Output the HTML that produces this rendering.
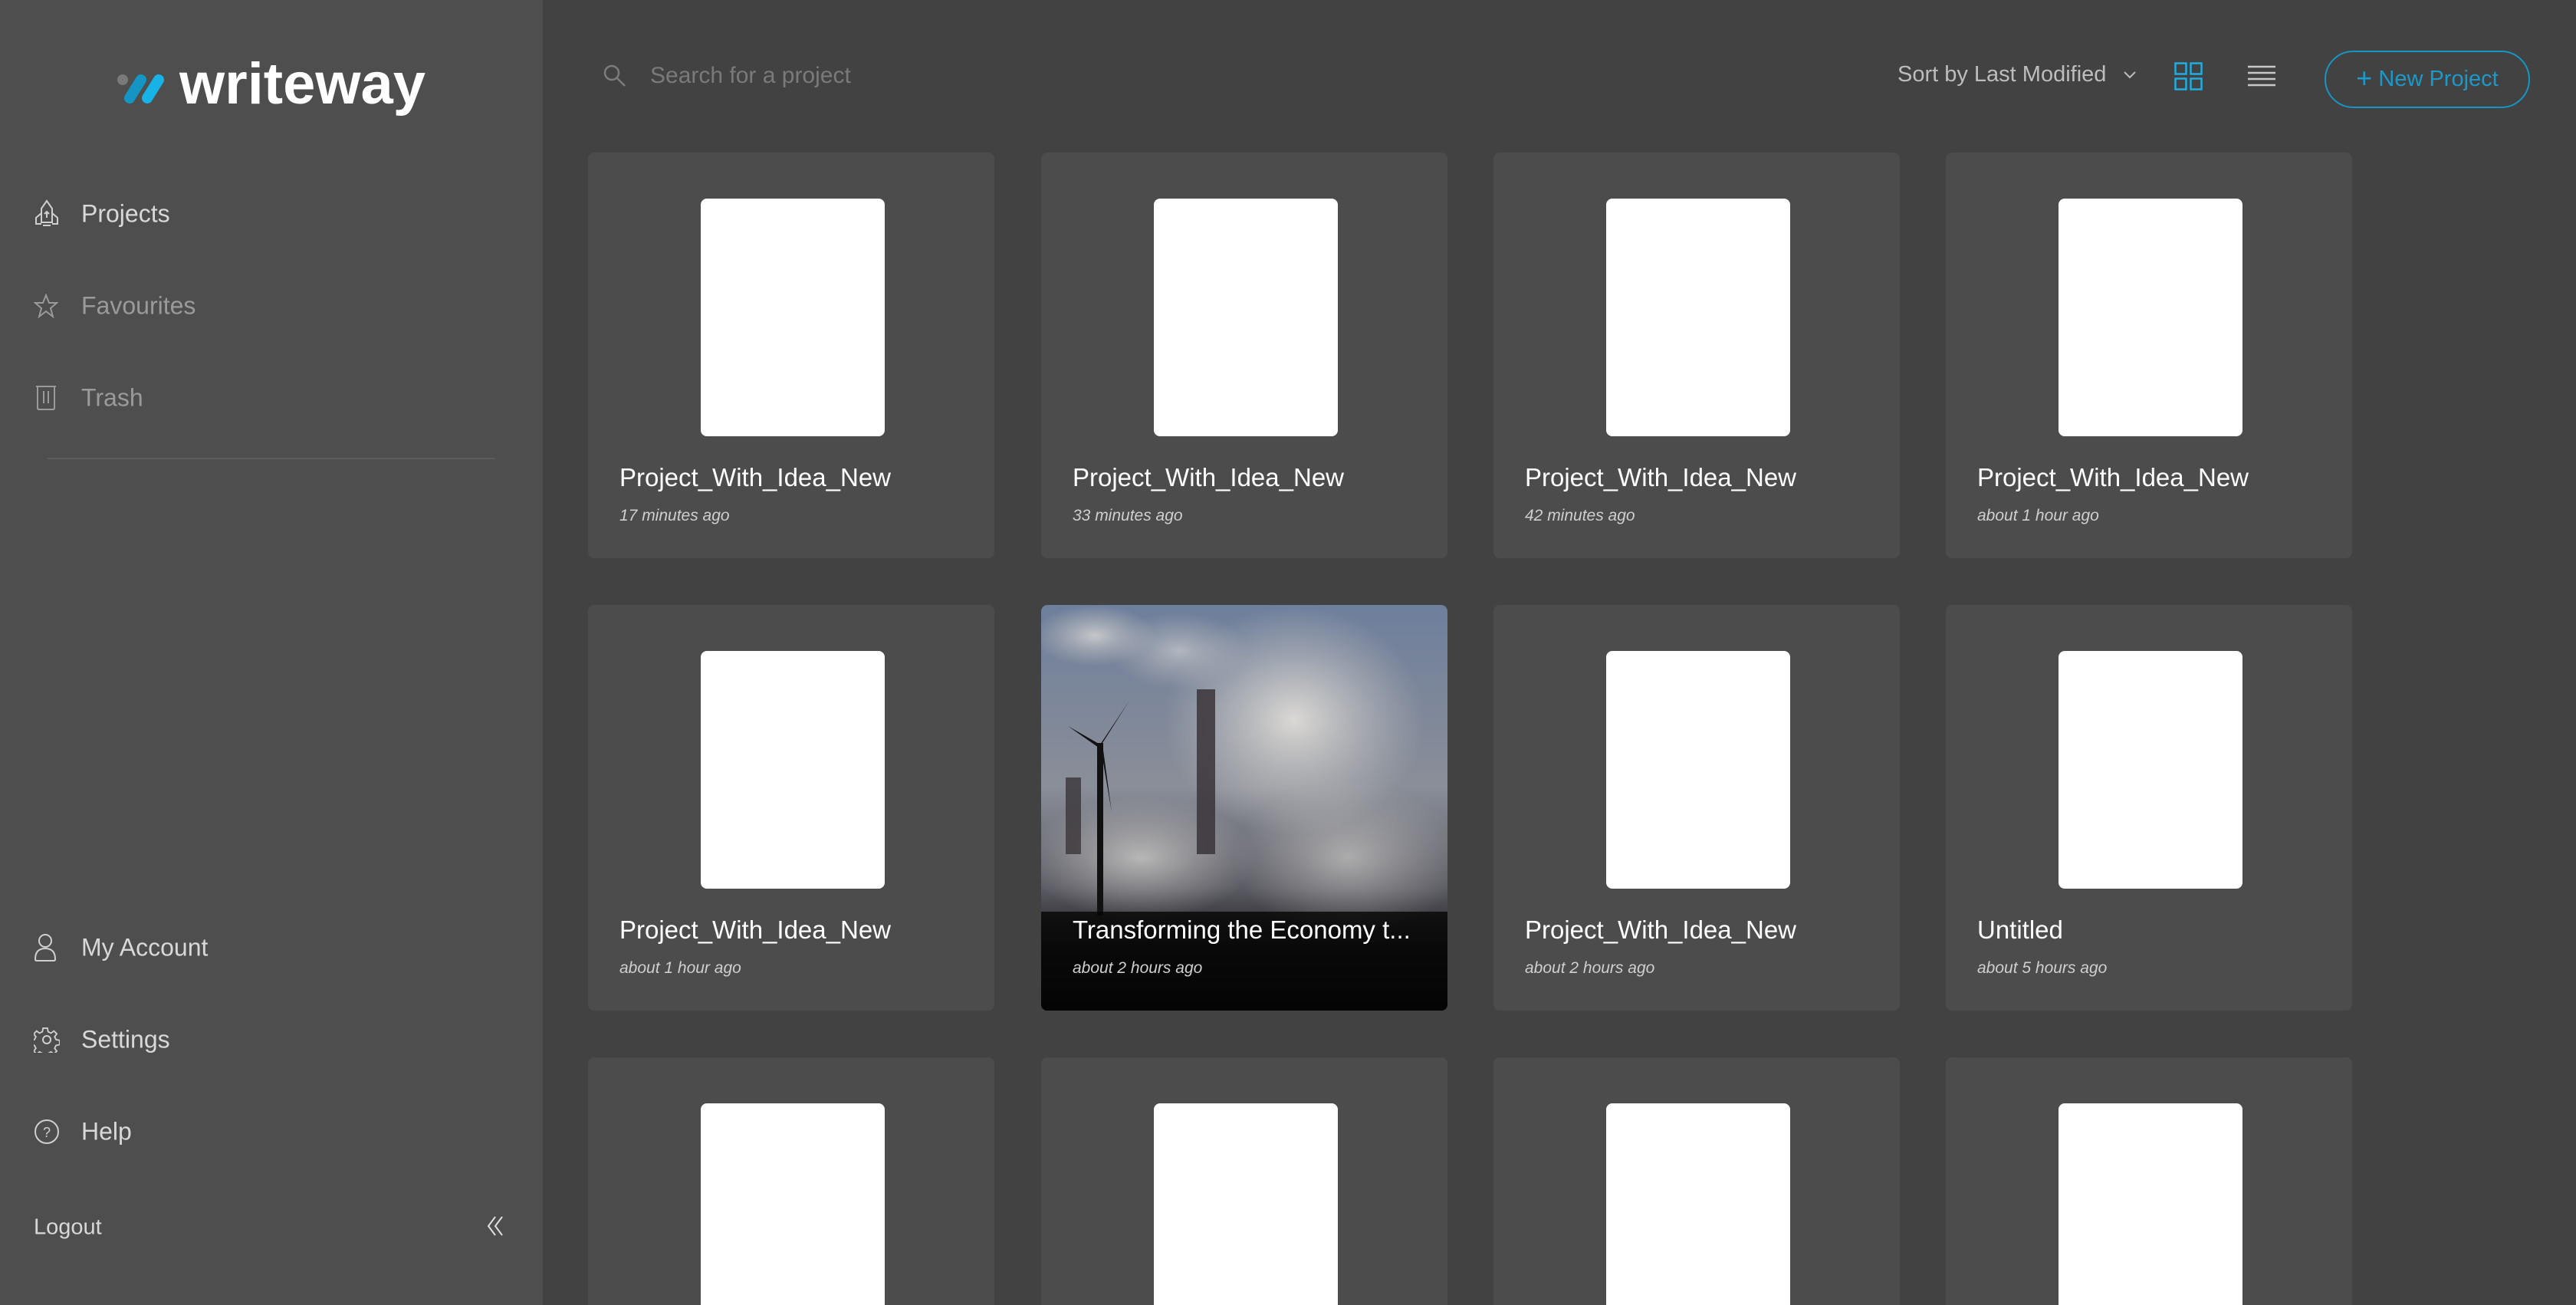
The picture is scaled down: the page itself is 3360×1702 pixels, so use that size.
<!DOCTYPE html>
<html style="width:3360px;height:1702px;overflow:hidden"><head><meta charset="utf-8"><style>
*{margin:0;padding:0;box-sizing:border-box}
body{width:3360px;height:1702px;overflow:hidden;background:#424242;font-family:"Liberation Sans",sans-serif;position:relative}
.side{position:absolute;left:0;top:0;width:708px;height:1702px;background:#4e4e4e}
.logo{position:absolute;left:234px;top:66px;font-size:76px;font-weight:bold;color:#fff}
.nav{position:absolute;left:106px;font-size:32px;color:#d8d8d8;transform:translateY(-50%)}
.nav.dim{color:#9a9a9a}
.ic{position:absolute;left:44px;transform:translateY(-50%)}
.card{position:absolute;width:530px;height:529px;background:#4c4c4c;border-radius:8px;overflow:hidden}
.paper{position:absolute;left:147px;top:60px;width:240px;height:310px;background:#fff;border-radius:8px}
.t{position:absolute;left:41px;top:405px;font-size:33px;color:#fff;white-space:nowrap}
.d{position:absolute;left:41px;top:462px;font-size:21px;color:#cfcfcf;font-style:italic}
.r3{height:323px;border-radius:8px 8px 0 0}
</style></head><body>
<div class="side">
<svg style="position:absolute;left:148px;top:92px" width="70" height="50" viewBox="0 0 70 50">
<circle cx="12" cy="12" r="7" fill="#7a7a7a"/>
<line x1="21" y1="36" x2="36" y2="12" stroke="#1495c4" stroke-width="14" stroke-linecap="round"/>
<line x1="44" y1="36" x2="59" y2="12" stroke="#17b2e6" stroke-width="14" stroke-linecap="round"/>
</svg>
<div class="logo">writeway</div>

<svg class="ic" style="top:279px" width="34" height="38" viewBox="0 0 34 38" fill="none" stroke="#cfcfcf" stroke-width="2"><path d="M17 2 L10 12 L10 30 L24 30 L24 12 Z"/><path d="M10 18 L3 24 L3 32 L10 32 M24 18 L31 24 L31 32 L24 32"/><path d="M12 34 h10"/><path d="M17 24 V16 M14 19 L17 16 L20 19"/></svg>
<div class="nav" style="top:279px">Projects</div>
<svg class="ic" style="top:399px" width="32" height="32" viewBox="0 0 32 32" fill="none" stroke="#9a9a9a" stroke-width="2"><path d="M16 2 L20 12 L30 12 L22 19 L25 30 L16 23 L7 30 L10 19 L2 12 L12 12 Z"/></svg>
<div class="nav dim" style="top:399px">Favourites</div>
<svg class="ic" style="top:519px;left:46px" width="28" height="34" viewBox="0 0 28 34" fill="none" stroke="#9a9a9a" stroke-width="2"><path d="M1 2 H27 M3 2 V30 Q3 32 5 32 H23 Q25 32 25 30 V2 M11 8 V24 M17 8 V24"/></svg>
<div class="nav dim" style="top:519px">Trash</div>
<div style="position:absolute;left:62px;top:597px;width:584px;height:2px;background:#5c5c5c"></div>

<svg class="ic" style="top:1236px" width="30" height="38" viewBox="0 0 30 38" fill="none" stroke="#cfcfcf" stroke-width="2"><circle cx="15" cy="10" r="8"/><path d="M2 34 Q2 20 15 20 Q28 20 28 34 Q28 36 26 36 H4 Q2 36 2 34 Z"/></svg>
<div class="nav" style="top:1236px">My Account</div>
<svg class="ic" style="top:1356px" width="34" height="34" viewBox="0 0 34 34" fill="none" stroke="#cfcfcf" stroke-width="2"><path d="M14 2h6l1 5 4 2 4-3 4 4-3 4 2 4 5 1v6l-5 1-2 4 3 4-4 4-4-3-4 2-1 5h-6l-1-5-4-2-4 3-4-4 3-4-2-4-5-1v-6l5-1 2-4-3-4 4-4 4 3 4-2z" transform="scale(.94) translate(-1,0)"/><circle cx="17" cy="17" r="5"/></svg>
<div class="nav" style="top:1356px">Settings</div>
<svg class="ic" style="top:1476px" width="34" height="34" viewBox="0 0 34 34" fill="none" stroke="#cfcfcf" stroke-width="2"><circle cx="17" cy="17" r="15"/><text x="17" y="24" font-size="18" fill="#cfcfcf" stroke="none" text-anchor="middle" font-family="Liberation Sans">?</text></svg>
<div class="nav" style="top:1476px">Help</div>
<div class="nav" style="top:1601px;left:44px;font-size:29px">Logout</div>
<svg style="position:absolute;left:634px;top:1585px" width="24" height="28" viewBox="0 0 24 28" fill="none" stroke="#e0e0e0" stroke-width="2"><path d="M12 2 L3 14 L12 26 M21 2 L12 14 L21 26"/></svg>
</div>

<svg style="position:absolute;left:786px;top:83px" width="32" height="32" viewBox="0 0 32 32" fill="none" stroke="#7c7c7c" stroke-width="2.5"><circle cx="12" cy="12" r="9"/><path d="M19 19 L29 29"/></svg>
<div style="position:absolute;left:848px;top:82px;font-size:30px;color:#7a7a7a">Search for a project</div>

<div style="position:absolute;left:2475px;top:81px;font-size:29px;color:#bdbdbd">Sort by Last Modified</div>
<svg style="position:absolute;left:2768px;top:92px" width="20" height="12" viewBox="0 0 20 12" fill="none" stroke="#bdbdbd" stroke-width="2"><path d="M3 2 L10 9 L17 2"/></svg>
<svg style="position:absolute;left:2836px;top:81px" width="38" height="38" viewBox="0 0 38 38" fill="none" stroke="#22ace0" stroke-width="2.5"><rect x="1.5" y="1.5" width="14" height="14"/><rect x="21.5" y="1.5" width="14" height="14"/><rect x="1.5" y="21.5" width="14" height="14"/><rect x="21.5" y="21.5" width="14" height="14"/></svg>
<svg style="position:absolute;left:2931px;top:84px" width="38" height="30" viewBox="0 0 38 30" fill="none" stroke="#c8c8c8" stroke-width="2.5"><path d="M1 3 H37 M1 11 H37 M1 19 H37 M1 27 H37"/></svg>
<div style="position:absolute;left:3032px;top:66px;width:268px;height:75px;border:2.5px solid #1795c3;border-radius:38px;color:#1a9acb;font-size:29px;line-height:68px;text-align:center"><span style="font-size:36px;vertical-align:-2px">+</span> New Project</div>

<div class="card" style="left:767px;top:199px"><div class="paper"></div><div class="t">Project_With_Idea_New</div><div class="d">17 minutes ago</div></div>
<div class="card" style="left:1358px;top:199px"><div class="paper"></div><div class="t">Project_With_Idea_New</div><div class="d">33 minutes ago</div></div>
<div class="card" style="left:1948px;top:199px"><div class="paper"></div><div class="t">Project_With_Idea_New</div><div class="d">42 minutes ago</div></div>
<div class="card" style="left:2538px;top:199px"><div class="paper"></div><div class="t">Project_With_Idea_New</div><div class="d">about 1 hour ago</div></div>

<div class="card" style="left:767px;top:789px"><div class="paper"></div><div class="t">Project_With_Idea_New</div><div class="d">about 1 hour ago</div></div>
<div class="card" style="left:1358px;top:789px;background:#000">
<svg style="position:absolute;left:0;top:0" width="530" height="529" viewBox="0 0 530 529">
<defs>
<linearGradient id="sky" x1="0" y1="0" x2="0" y2="1"><stop offset="0" stop-color="#6e7f9c"/><stop offset=".45" stop-color="#8a8e98"/><stop offset=".7" stop-color="#5a5a62"/><stop offset=".85" stop-color="#1a1a1c"/><stop offset="1" stop-color="#020202"/></linearGradient>
<radialGradient id="c1" cx=".5" cy=".5" r=".5"><stop offset="0" stop-color="#e0ddd8" stop-opacity=".95"/><stop offset="1" stop-color="#c8c6c2" stop-opacity="0"/></radialGradient>
</defs>
<rect width="530" height="529" fill="url(#sky)"/>
<ellipse cx="330" cy="150" rx="170" ry="150" fill="url(#c1)"/>
<ellipse cx="130" cy="330" rx="150" ry="80" fill="url(#c1)" opacity=".7"/>
<ellipse cx="400" cy="330" rx="150" ry="100" fill="url(#c1)" opacity=".6"/>
<ellipse cx="70" cy="40" rx="80" ry="40" fill="url(#c1)" opacity=".8"/>
<ellipse cx="180" cy="60" rx="90" ry="50" fill="url(#c1)" opacity=".6"/>
<rect x="203" y="110" width="24" height="215" fill="#3a3438" opacity=".85"/>
<rect x="32" y="225" width="20" height="100" fill="#3a3438" opacity=".8"/>
<rect x="73" y="180" width="8" height="225" fill="#111"/>
<path d="M77 182 L115 125 L80 180 Z M77 182 L35 158 L75 186 Z M77 182 L92 270 L80 182 Z" fill="#111"/>
<rect x="0" y="400" width="530" height="129" fill="#050505" opacity=".8"/>
</svg>
<div class="t">Transforming the Economy t...</div><div class="d">about 2 hours ago</div></div>
<div class="card" style="left:1948px;top:789px"><div class="paper"></div><div class="t">Project_With_Idea_New</div><div class="d">about 2 hours ago</div></div>
<div class="card" style="left:2538px;top:789px"><div class="paper"></div><div class="t">Untitled</div><div class="d">about 5 hours ago</div></div>

<div class="card r3" style="left:767px;top:1379px"><div class="paper"></div></div>
<div class="card r3" style="left:1358px;top:1379px"><div class="paper"></div></div>
<div class="card r3" style="left:1948px;top:1379px"><div class="paper"></div></div>
<div class="card r3" style="left:2538px;top:1379px"><div class="paper"></div></div>
</body></html>
